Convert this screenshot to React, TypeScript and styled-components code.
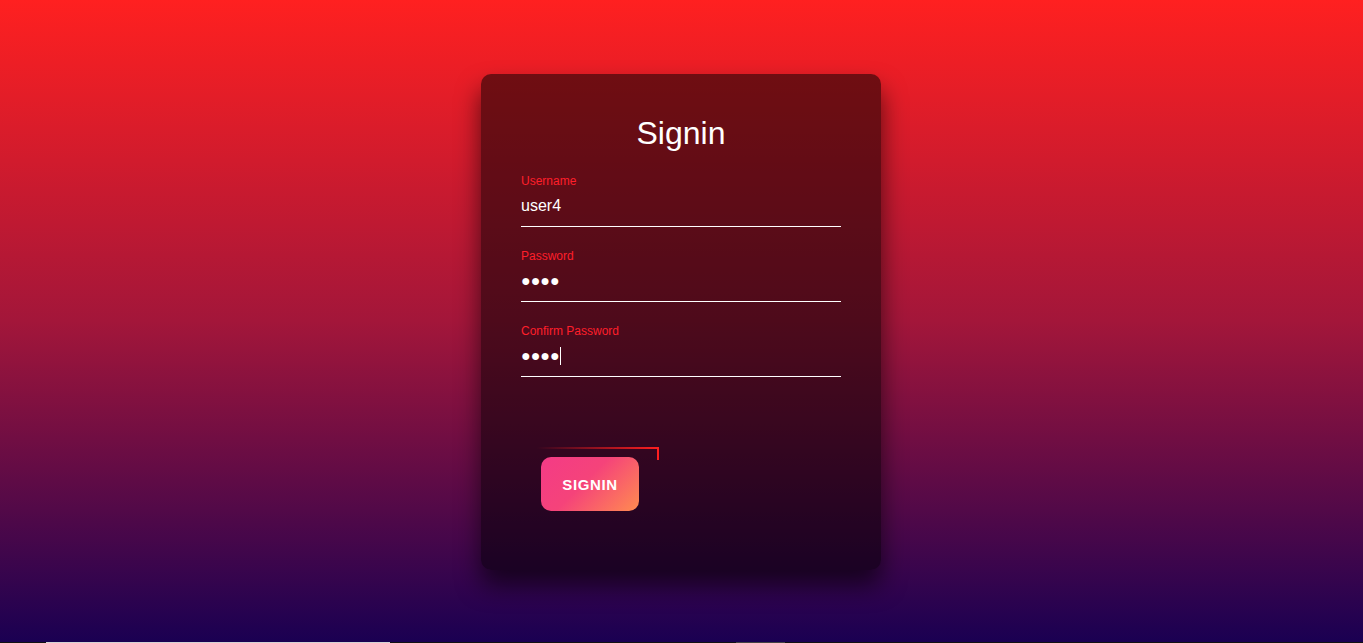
import React from "react";
import styled, { createGlobalStyle } from "styled-components";

const Global = createGlobalStyle`
  html, body { margin: 0; padding: 0; }
  body { font-family: "Liberation Sans", Arial, sans-serif; background: #121212; }
  * { box-sizing: border-box; }
`;

const Hero = styled.section`
  height: 642px;
  padding: 2px 1px 0 0;
  display: flex;
  align-items: center;
  justify-content: center;
  background: linear-gradient(to bottom, #ff2020 0%, #a3163a 50%, #1a0052 100%);
`;

const Card = styled.div`
  width: 400px;
  padding: 41px 40px 39px;
  border-radius: 10px;
  background: rgba(0, 0, 0, 0.52);
  box-shadow: 0 15px 25px rgba(0, 0, 0, 0.6);
`;

const Title = styled.h2`
  margin: 0 0 22px;
  font-size: 32px;
  line-height: 37px;
  font-weight: 400;
  color: #fff;
  text-align: center;
`;

const Field = styled.div`
  position: relative;
  display: flex;
  flex-direction: column;
  margin-bottom: 22px;
`;

const Label = styled.label`
  font-size: 12px;
  line-height: 14px;
  color: #ff1f2a;
`;

const Input = styled.input`
  display: block;
  width: 100%;
  padding: 8px 0 10px;
  font-family: "Liberation Sans", Arial, sans-serif;
  font-size: 16px;
  line-height: 20px;
  color: #fff;
  caret-color: #fff;
  background: transparent;
  border: none;
  border-bottom: 1px solid #fff;
  outline: none;
`;

const Caret = styled.span`
  position: absolute;
  left: 39px;
  top: 23px;
  width: 1px;
  height: 18px;
  background: #fff;
`;

const ButtonWrap = styled.div`
  position: relative;
  display: flex;
  width: fit-content;
  margin-top: 60px;
  padding: 20px;
`;

const TopLine = styled.span`
  position: absolute;
  top: 10px;
  right: 0;
  width: 122px;
  height: 2px;
  background: linear-gradient(90deg, transparent, #ff1f1f);
`;

const SideLine = styled.span`
  position: absolute;
  top: 10px;
  right: 0;
  width: 2px;
  height: 13px;
  background: #ff1f1f;
`;

const Button = styled.button`
  position: relative;
  width: 98px;
  height: 54px;
  padding: 0;
  border: none;
  border-radius: 10px;
  background: linear-gradient(135deg, #f43b86 0%, #f5437a 45%, #ff8c50 100%);
  color: #fff;
  font-family: "Liberation Sans", Arial, sans-serif;
  font-weight: 700;
  font-size: 15px;
  letter-spacing: 0.6px;
  cursor: pointer;
`;

const Footer = styled.footer`
  height: 40px;
  background: #121212;
  display: flex;
  align-items: flex-start;
  padding-left: 46px;
  gap: 346px;
`;

const Bar = styled.div<{ $w: number; $c: string }>`
  width: ${(p) => p.$w}px;
  height: 2px;
  background: ${(p) => p.$c};
`;

export default function App() {
  return (
    <>
      <Global />
      <Hero>
        <Card>
          <Title>Signin</Title>
          <Field>
            <Label>Username</Label>
            <Input type="text" defaultValue="user4" />
          </Field>
          <Field>
            <Label>Password</Label>
            <Input type="text" readOnly value="●●●●" />
          </Field>
          <Field>
            <Label>Confirm Password</Label>
            <Input type="text" readOnly value="●●●●" />
            <Caret />
          </Field>
          <ButtonWrap>
            <TopLine />
            <SideLine />
            <Button>SIGNIN</Button>
          </ButtonWrap>
        </Card>
      </Hero>
      <Footer>
        <Bar $w={344} $c="#d4d4d4" />
        <Bar $w={49} $c="#444" />
      </Footer>
    </>
  );
}
